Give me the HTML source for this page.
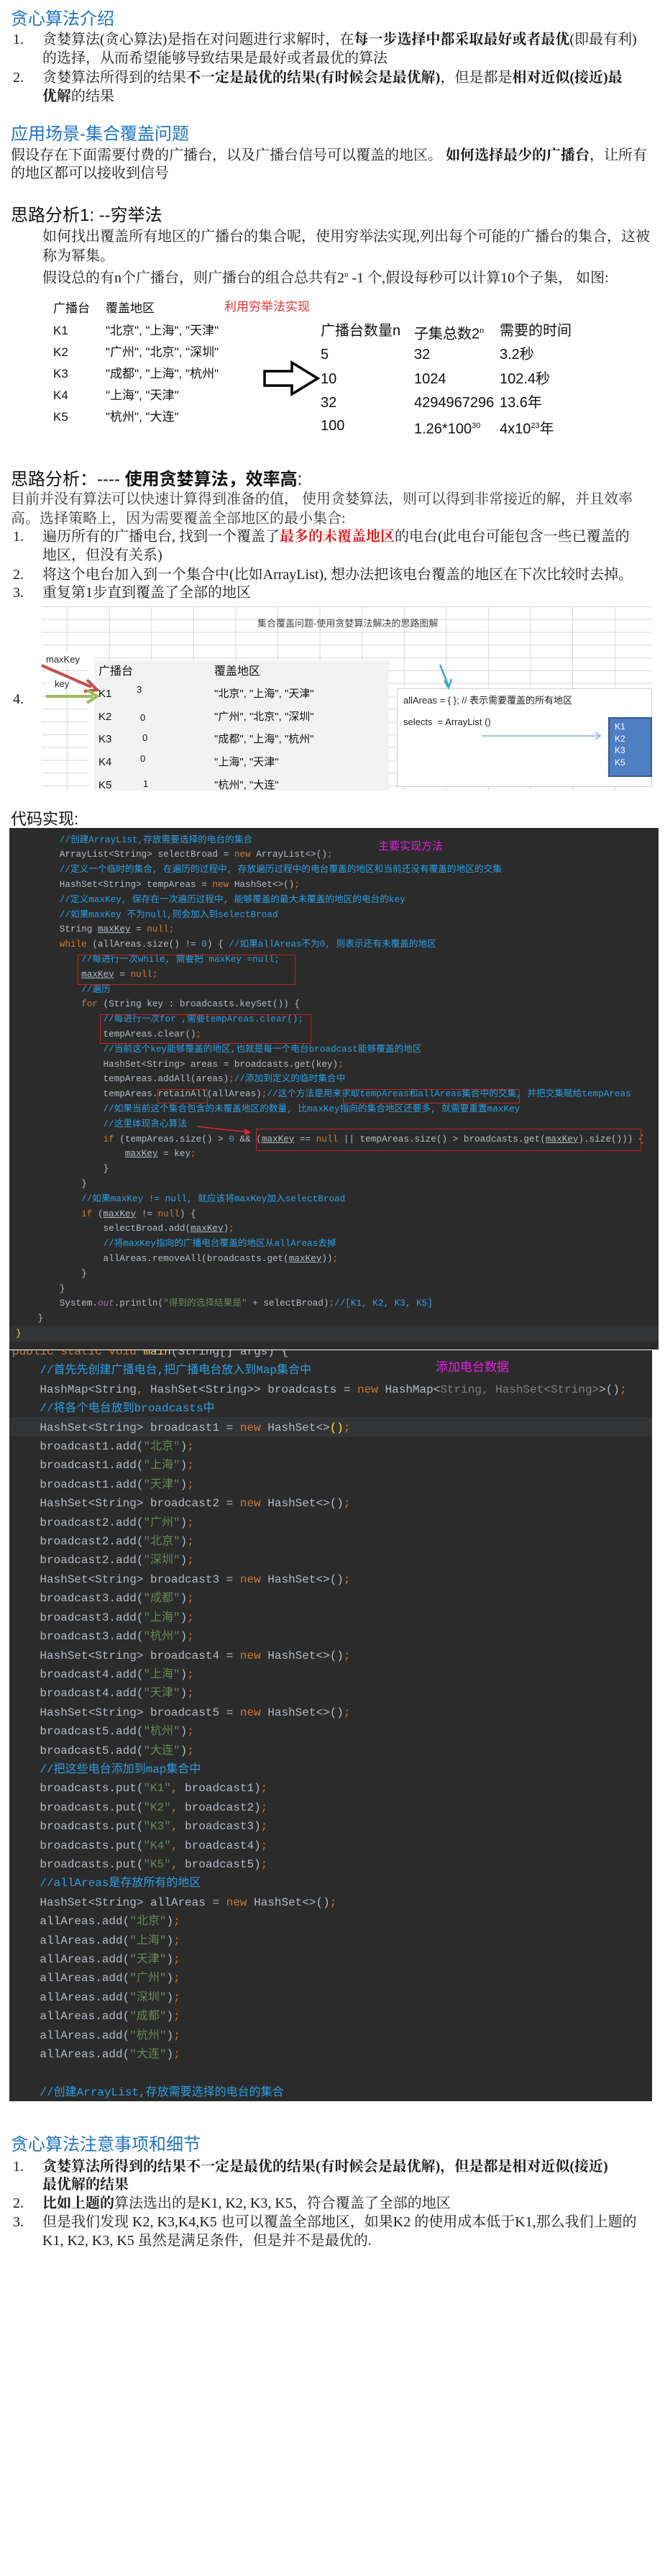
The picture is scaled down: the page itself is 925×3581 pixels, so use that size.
<!DOCTYPE html>
<html><head><meta charset="utf-8">
<style>
*{margin:0;padding:0;box-sizing:border-box}
body{width:925px;height:3581px;background:#fff;position:relative;overflow:hidden;font-family:"Liberation Serif","Noto Serif CJK SC",serif;color:#1a1a1a}
.a{position:absolute;white-space:nowrap}
.t{font-size:20px;line-height:26px}
.h{font-family:"Liberation Sans","Noto Sans CJK SC",sans-serif;font-size:24px;line-height:30px;color:#1f74bf}
.k{font-family:"Liberation Sans","Noto Sans CJK SC",sans-serif;font-size:24px;line-height:30px;color:#111}
.s{font-family:"Liberation Sans","Noto Sans CJK SC",sans-serif}
.tb{font-family:"Liberation Sans","Noto Sans CJK SC",sans-serif;font-size:17px;line-height:22px;color:#111}
.tr{font-family:"Liberation Sans","Noto Sans CJK SC",sans-serif;font-size:20px;line-height:26px;color:#111}
b{font-weight:bold}
.code{position:absolute;background:#2b2b2b;overflow:hidden}
.code pre{font-family:"Liberation Mono","Noto Sans CJK SC",monospace;color:#b4bcc6;white-space:pre;position:relative}
.c{color:#2d9fe3}.o{color:#cc7832}.g{color:#6a8759}.p{color:#9876aa;font-style:italic}.n{color:#808080}
.u{text-decoration:underline}
.box{position:absolute;border:1.5px solid #c42323}
.hl{position:absolute;background:#333436}
.grid{position:absolute;background-image:linear-gradient(#d6d6d6 1px,transparent 1px),linear-gradient(90deg,#d6d6d6 1px,transparent 1px);background-size:58.6px 17.8px}
</style></head><body>

<div class="a h" style="left:15px;top:12px">贪心算法介绍</div>
<div class="a t" style="left:18px;top:42px">1.</div>
<div class="a t" style="left:59px;top:42px">贪婪算法(贪心算法)是指在对问题进行求解时，在<b>每一步选择中都采取最好或者最优</b>(即最有利)</div>
<div class="a t" style="left:59px;top:68px">的选择，从而希望能够导致结果是最好或者最优的算法</div>
<div class="a t" style="left:18px;top:95px">2.</div>
<div class="a t" style="left:59px;top:95px">贪婪算法所得到的结果<b>不一定是最优的结果(有时候会是最优解)</b>，但是都是<b>相对近似(接近)最</b></div>
<div class="a t" style="left:59px;top:121px"><b>优解</b>的结果</div>

<div class="a h" style="left:15px;top:172px">应用场景-集合覆盖问题</div>
<div class="a t" style="left:15px;top:203px">假设存在下面需要付费的广播台，以及广播台信号可以覆盖的地区。 <b>如何选择最少的广播台</b>，让所有</div>
<div class="a t" style="left:15px;top:228px">的地区都可以接收到信号</div>

<div class="a k" style="left:15px;top:285px">思路分析1: --穷举法</div>
<div class="a t" style="left:59px;top:316px">如何找出覆盖所有地区的广播台的集合呢，使用穷举法实现,列出每个可能的广播台的集合，这被</div>
<div class="a t" style="left:59px;top:343px">称为幂集。</div>
<div class="a t" style="left:59px;top:369px">假设总的有n个广播台，则广播台的组合总共有2<sup style="font-size:11px">n</sup> -1 个,假设每秒可以计算10个子集， 如图:</div>

<div class="a tb" style="left:74px;top:418px">广播台</div>
<div class="a tb" style="left:147px;top:418px">覆盖地区</div>
<div class="a tb" style="left:312px;top:416px;color:#e53333">利用穷举法实现</div>
<div class="a tb" style="left:74px;top:449px">K1</div><div class="a tb" style="left:147px;top:449px">"北京", "上海", "天津"</div>
<div class="a tb" style="left:74px;top:479px">K2</div><div class="a tb" style="left:147px;top:479px">"广州", "北京", "深圳"</div>
<div class="a tb" style="left:74px;top:509px">K3</div><div class="a tb" style="left:147px;top:509px">"成都", "上海", "杭州"</div>
<div class="a tb" style="left:74px;top:539px">K4</div><div class="a tb" style="left:147px;top:539px">"上海", "天津"</div>
<div class="a tb" style="left:74px;top:569px">K5</div><div class="a tb" style="left:147px;top:569px">"杭州", "大连"</div>

<svg class="a" style="left:364px;top:500px" width="84" height="52"><path d="M4 16 H42 V4 L78 26 L42 48 V36 H4 Z" fill="#fff" stroke="#000" stroke-width="3.5"/></svg>

<div class="a tr" style="left:446px;top:447px">广播台数量n</div>
<div class="a tr" style="left:576px;top:447px">子集总数2<sup style="font-size:11px">n</sup></div>
<div class="a tr" style="left:695px;top:447px">需要的时间</div>
<div class="a tr" style="left:446px;top:480px">5</div><div class="a tr" style="left:576px;top:480px">32</div><div class="a tr" style="left:695px;top:480px">3.2秒</div>
<div class="a tr" style="left:446px;top:514px">10</div><div class="a tr" style="left:576px;top:514px">1024</div><div class="a tr" style="left:695px;top:514px">102.4秒</div>
<div class="a tr" style="left:446px;top:547px">32</div><div class="a tr" style="left:576px;top:547px">4294967296</div><div class="a tr" style="left:695px;top:547px">13.6年</div>
<div class="a tr" style="left:446px;top:579px">100</div><div class="a tr" style="left:576px;top:579px">1.26*100<sup style="font-size:11px">30</sup></div><div class="a tr" style="left:695px;top:579px">4x10<sup style="font-size:11px">23</sup>年</div>

<div class="a k" style="left:15px;top:652px">思路分析：---- <b>使用贪婪算法，效率高</b>:</div>
<div class="a t" style="left:15px;top:681px;color:#333">目前并没有算法可以快速计算得到准备的值， 使用贪婪算法，则可以得到非常接近的解，并且效率</div>
<div class="a t" style="left:15px;top:708px;color:#333">高。选择策略上，因为需要覆盖全部地区的最小集合:</div>
<div class="a t" style="left:18px;top:733px">1.</div>
<div class="a t" style="left:59px;top:733px">遍历所有的广播电台, 找到一个覆盖了<b style="color:#e31b1b">最多的未覆盖地区</b>的电台(此电台可能包含一些已覆盖的</div>
<div class="a t" style="left:59px;top:759px">地区，但没有关系)</div>
<div class="a t" style="left:18px;top:786px">2.</div>
<div class="a t" style="left:59px;top:786px">将这个电台加入到一个集合中(比如ArrayList), 想办法把该电台覆盖的地区在下次比较时去掉。</div>
<div class="a t" style="left:18px;top:811px">3.</div>
<div class="a t" style="left:59px;top:811px">重复第1步直到覆盖了全部的地区</div>

<!-- diagram -->
<div class="grid" style="left:58px;top:843px;width:849px;height:256px;background-position:35px 0"></div>
<div class="a s" style="left:358px;top:856px;font-size:13px;color:#444">集合覆盖问题-使用贪婪算法解决的思路图解</div>
<div class="a" style="left:123px;top:910px;width:8px;height:190px;background:#fff"></div>
<div class="a" style="left:58px;top:906px;width:73px;height:20px;background:#fff"></div>
<div class="a s" style="left:64px;top:909px;font-size:13px;color:#222">maxKey</div>
<div class="a" style="left:68px;top:943px;width:40px;height:16px;background:#fff"></div>
<div class="a s" style="left:76px;top:943px;font-size:13px;color:#222">key</div>
<div class="a" style="left:131px;top:918px;width:410px;height:181px;background:#f2f2f2"></div>
<div class="a tb" style="left:137px;top:923px;font-size:16px">广播台</div>
<div class="a tb" style="left:298px;top:923px;font-size:16px">覆盖地区</div>
<div class="a tb" style="left:137px;top:954px;font-size:15px">K1</div><div class="a tb" style="left:190px;top:948px;font-size:13px">3</div><div class="a tb" style="left:298px;top:954px;font-size:15px">"北京", "上海", "天津"</div>
<div class="a tb" style="left:137px;top:986px;font-size:15px">K2</div><div class="a tb" style="left:195px;top:987px;font-size:13px">0</div><div class="a tb" style="left:298px;top:986px;font-size:15px">"广州", "北京", "深圳"</div>
<div class="a tb" style="left:137px;top:1017px;font-size:15px">K3</div><div class="a tb" style="left:198px;top:1015px;font-size:13px">0</div><div class="a tb" style="left:298px;top:1017px;font-size:15px">"成都", "上海", "杭州"</div>
<div class="a tb" style="left:137px;top:1049px;font-size:15px">K4</div><div class="a tb" style="left:195px;top:1044px;font-size:13px">0</div><div class="a tb" style="left:298px;top:1049px;font-size:15px">"上海", "天津"</div>
<div class="a tb" style="left:137px;top:1081px;font-size:15px">K5</div><div class="a tb" style="left:199px;top:1079px;font-size:13px">1</div><div class="a tb" style="left:298px;top:1081px;font-size:15px">"杭州", "大连"</div>
<svg class="a" style="left:55px;top:915px" width="90" height="65">
<path d="M3 10 L72 40" stroke="#c0504d" stroke-width="4"/><path d="M66 30 L80 44 L62 46" fill="none" stroke="#c0504d" stroke-width="4"/>
<path d="M9 53 L74 53" stroke="#9bbb59" stroke-width="4"/><path d="M66 44 L80 53 L66 62" fill="none" stroke="#9bbb59" stroke-width="4"/>
</svg>
<div class="a t" style="left:18px;top:959px">4.</div>
<div class="a" style="left:552px;top:957px;width:355px;height:137px;background:#fff;border:1px solid #cfcfcf"></div>
<div class="a s" style="left:561px;top:963px;font-size:13px;color:#222">allAreas = { }; // 表示需要覆盖的所有地区</div>
<div class="a s" style="left:561px;top:996px;font-size:13px;color:#222">selects &nbsp;= ArrayList ()</div>
<svg class="a" style="left:600px;top:918px" width="250" height="110">
<path d="M12 6 L24 36" stroke="#3ea6c9" stroke-width="2.5"/><path d="M18 28 L24 38 L28 26" fill="none" stroke="#3ea6c9" stroke-width="2.5"/>
<path d="M70 105 L234 105" stroke="#8eaedb" stroke-width="1.5"/><path d="M228 100 L235 105 L228 110" fill="none" stroke="#8eaedb" stroke-width="1.5"/>
</svg>
<div class="a" style="left:846px;top:997px;width:61px;height:83px;background:#4f7fc2;border:2px solid #35598f"></div>
<div class="a s" style="left:855px;top:1002px;font-size:12px;line-height:16.7px;color:#fff;white-space:pre">K1
K2
K3
K5</div>

<div class="a k" style="left:15px;top:1124px;font-size:22px">代码实现:</div>

<!-- code block 1 -->
<div class="code" style="left:13px;top:1151px;width:903px;height:725px">
<div class="hl" style="left:0;top:692px;width:903px;height:22px"></div>
<pre style="font-size:12.67px;line-height:20.8px;padding:6.6px 0 0 9px">        <span class="c">//创建ArrayList,存放需要选择的电台的集合</span>
        ArrayList&lt;String&gt; selectBroad = <span class="o">new</span> ArrayList&lt;&gt;()<span class="o">;</span>
        <span class="c">//定义一个临时的集合, 在遍历的过程中, 存放遍历过程中的电台覆盖的地区和当前还没有覆盖的地区的交集</span>
        HashSet&lt;String&gt; tempAreas = <span class="o">new</span> HashSet&lt;&gt;()<span class="o">;</span>
        <span class="c">//定义maxKey, 保存在一次遍历过程中, 能够覆盖的最大未覆盖的地区的电台的key</span>
        <span class="c">//如果maxKey 不为null,则会加入到selectBroad</span>
        String <span class="u">maxKey</span> = <span class="o">null;</span>
        <span class="o">while</span> (allAreas.size() != <span style="color:#6897bb">0</span>) { <span class="c">//如果allAreas不为0, 则表示还有未覆盖的地区</span>
            <span class="c">//每进行一次while, 需要把 maxKey =null;</span>
            <span class="u">maxKey</span> = <span class="o">null;</span>
            <span class="c">//遍历</span>
            <span class="o">for</span> (String key : broadcasts.keySet()) {
                <span class="c">//每进行一次for ,需要tempAreas.clear();</span>
                tempAreas.clear()<span class="o">;</span>
                <span class="c">//当前这个key能够覆盖的地区,也就是每一个电台broadcast能够覆盖的地区</span>
                HashSet&lt;String&gt; areas = broadcasts.get(key)<span class="o">;</span>
                tempAreas.addAll(areas)<span class="o">;</span><span class="c">//添加到定义的临时集合中</span>
                tempAreas.retainAll(allAreas)<span class="o">;</span><span class="c">//这个方法是用来求取tempAreas和allAreas集合中的交集, 并把交集赋给tempAreas</span>
                <span class="c">//如果当前这个集合包含的未覆盖地区的数量, 比maxKey指向的集合地区还要多, 就需要重置maxKey</span>
                <span class="c">//这里体现贪心算法</span>
                <span class="o">if</span> (tempAreas.size() &gt; <span style="color:#6897bb">0</span> &amp;&amp; (<span class="u">maxKey</span> == <span class="o">null</span> || tempAreas.size() &gt; broadcasts.get(<span class="u">maxKey</span>).size())) {
                    <span class="u">maxKey</span> = key<span class="o">;</span>
                }
            }
            <span class="c">//如果maxKey != null, 就应该将maxKey加入selectBroad</span>
            <span class="o">if</span> (<span class="u">maxKey</span> != <span class="o">null</span>) {
                selectBroad.add(<span class="u">maxKey</span>)<span class="o">;</span>
                <span class="c">//将maxKey指向的广播电台覆盖的地区从allAreas去掉</span>
                allAreas.removeAll(broadcasts.get(<span class="u">maxKey</span>))<span class="o">;</span>
            }
        }
        System.<span class="p">out</span>.println(<span class="g">"得到的选择结果是"</span> + selectBroad)<span class="o">;</span><span class="c">//[K1, K2, K3, K5]</span>
    }
<span style="color:#e8d44d">}</span></pre>
</div>
<div class="a" style="left:526px;top:1165px;font-family:'Liberation Sans','Noto Sans CJK SC',sans-serif;font-size:15px;color:#e020e0">主要实现方法</div>
<div class="box" style="left:108px;top:1327px;width:303px;height:42px"></div>
<div class="box" style="left:139px;top:1410px;width:294px;height:41px"></div>
<div class="box" style="left:219px;top:1514px;width:70px;height:20px"></div>
<div class="box" style="left:477px;top:1514px;width:246px;height:20px"></div>
<div class="box" style="left:356px;top:1569px;width:536px;height:31px"></div>
<svg class="a" style="left:272px;top:1562px" width="84" height="18"><path d="M2 4 L76 12" stroke="#e02525" stroke-width="1.5"/><path d="M68 7 L78 12 L68 16 Z" fill="#e02525"/></svg>

<!-- code block 2 -->
<div class="code" style="left:13px;top:1877px;width:894px;height:1044px">
<div class="hl" style="left:0;top:93px;width:894px;height:27px"></div>
<pre style="font-size:16px;line-height:26.4px;padding:0 0 0 4px;top:-11px"><span class="o">public static void</span> <span style="color:#ffc66d">main</span>(String[] args) {
    <span class="c">//首先先创建广播电台,把广播电台放入到Map集合中</span>
    HashMap&lt;String<span class="o">,</span> HashSet&lt;String&gt;&gt; broadcasts = <span class="o">new</span> HashMap&lt;<span class="n">String, HashSet&lt;String&gt;</span>&gt;()<span class="o">;</span>
    <span class="c">//将各个电台放到broadcasts中</span>
    HashSet&lt;String&gt; broadcast1 = <span class="o">new</span> HashSet&lt;&gt;<span style="color:#ffef28">()</span><span class="o">;</span>
    broadcast1.add(<span class="g">"北京"</span>)<span class="o">;</span>
    broadcast1.add(<span class="g">"上海"</span>)<span class="o">;</span>
    broadcast1.add(<span class="g">"天津"</span>)<span class="o">;</span>
    HashSet&lt;String&gt; broadcast2 = <span class="o">new</span> HashSet&lt;&gt;()<span class="o">;</span>
    broadcast2.add(<span class="g">"广州"</span>)<span class="o">;</span>
    broadcast2.add(<span class="g">"北京"</span>)<span class="o">;</span>
    broadcast2.add(<span class="g">"深圳"</span>)<span class="o">;</span>
    HashSet&lt;String&gt; broadcast3 = <span class="o">new</span> HashSet&lt;&gt;()<span class="o">;</span>
    broadcast3.add(<span class="g">"成都"</span>)<span class="o">;</span>
    broadcast3.add(<span class="g">"上海"</span>)<span class="o">;</span>
    broadcast3.add(<span class="g">"杭州"</span>)<span class="o">;</span>
    HashSet&lt;String&gt; broadcast4 = <span class="o">new</span> HashSet&lt;&gt;()<span class="o">;</span>
    broadcast4.add(<span class="g">"上海"</span>)<span class="o">;</span>
    broadcast4.add(<span class="g">"天津"</span>)<span class="o">;</span>
    HashSet&lt;String&gt; broadcast5 = <span class="o">new</span> HashSet&lt;&gt;()<span class="o">;</span>
    broadcast5.add(<span class="g">"杭州"</span>)<span class="o">;</span>
    broadcast5.add(<span class="g">"大连"</span>)<span class="o">;</span>
    <span class="c">//把这些电台添加到map集合中</span>
    broadcasts.put(<span class="g">"K1"</span><span class="o">,</span> broadcast1)<span class="o">;</span>
    broadcasts.put(<span class="g">"K2"</span><span class="o">,</span> broadcast2)<span class="o">;</span>
    broadcasts.put(<span class="g">"K3"</span><span class="o">,</span> broadcast3)<span class="o">;</span>
    broadcasts.put(<span class="g">"K4"</span><span class="o">,</span> broadcast4)<span class="o">;</span>
    broadcasts.put(<span class="g">"K5"</span><span class="o">,</span> broadcast5)<span class="o">;</span>
    <span class="c">//allAreas是存放所有的地区</span>
    HashSet&lt;String&gt; allAreas = <span class="o">new</span> HashSet&lt;&gt;()<span class="o">;</span>
    allAreas.add(<span class="g">"北京"</span>)<span class="o">;</span>
    allAreas.add(<span class="g">"上海"</span>)<span class="o">;</span>
    allAreas.add(<span class="g">"天津"</span>)<span class="o">;</span>
    allAreas.add(<span class="g">"广州"</span>)<span class="o">;</span>
    allAreas.add(<span class="g">"深圳"</span>)<span class="o">;</span>
    allAreas.add(<span class="g">"成都"</span>)<span class="o">;</span>
    allAreas.add(<span class="g">"杭州"</span>)<span class="o">;</span>
    allAreas.add(<span class="g">"大连"</span>)<span class="o">;</span>

    <span class="c">//创建ArrayList,存放需要选择的电台的集合</span></pre>
</div>
<div class="a" style="left:606px;top:1886px;font-family:'Liberation Sans','Noto Sans CJK SC',sans-serif;font-size:17px;color:#e020e0">添加电台数据</div>

<!-- final section -->
<div class="a h" style="left:15px;top:2967px">贪心算法注意事项和细节</div>
<div class="a t" style="left:18px;top:2999px">1.</div>
<div class="a t" style="left:59px;top:2999px"><b>贪婪算法所得到的结果不一定是最优的结果(有时候会是最优解)，但是都是相对近似(接近)</b></div>
<div class="a t" style="left:59px;top:3024px"><b>最优解的结果</b></div>
<div class="a t" style="left:18px;top:3050px">2.</div>
<div class="a t" style="left:59px;top:3050px"><b>比如上题的</b>算法选出的是K1, K2, K3, K5，符合覆盖了全部的地区</div>
<div class="a t" style="left:18px;top:3076px">3.</div>
<div class="a t" style="left:59px;top:3076px">但是我们发现 K2, K3,K4,K5 也可以覆盖全部地区，如果K2 的使用成本低于K1,那么我们上题的</div>
<div class="a t" style="left:59px;top:3102px">K1, K2, K3, K5 虽然是满足条件，但是并不是最优的.</div>

</body></html>
